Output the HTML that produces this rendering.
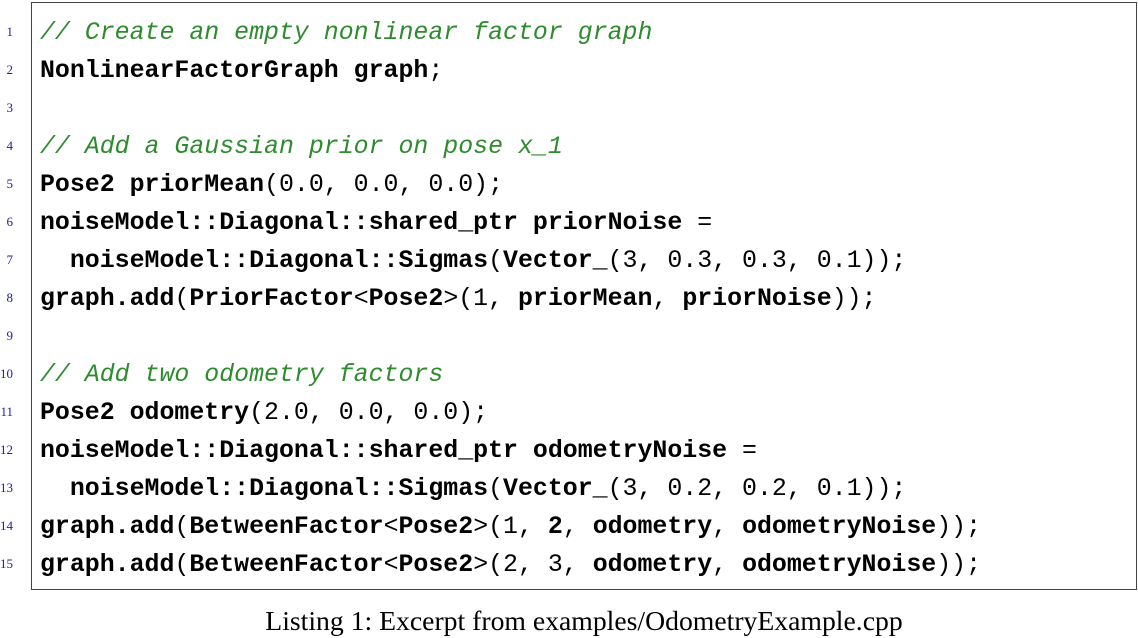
<!DOCTYPE html>
<html><head><style>
body{margin:0;width:1138px;height:636px;background:#fff;position:relative;overflow:hidden}
.box{position:absolute;left:31px;top:2px;width:1104px;height:586px;border:1.5px solid #444}
.l{position:absolute;left:40px;font-family:"Liberation Mono",monospace;font-size:24.9px;line-height:38px;height:38px;white-space:pre;color:#000}
.l b{font-weight:bold}
.c{color:#2e8b2e;font-style:italic}
.n{position:absolute;left:0;width:13px;text-align:right;font-family:"Liberation Serif",serif;font-size:13px;color:#22229a;line-height:38px;height:38px}
.cap{position:absolute;left:0;width:1168px;text-align:center;top:604px;font-family:"Liberation Serif",serif;font-size:27.7px;line-height:34px;color:#000}
</style></head><body>
<div class="box"></div>
<div class="n" style="top:13px">1</div><div class="l" style="top:14px"><span class="c">// Create an empty nonlinear factor graph</span></div>
<div class="n" style="top:51px">2</div><div class="l" style="top:52px"><b>NonlinearFactorGraph graph</b>;</div>
<div class="n" style="top:89px">3</div>
<div class="n" style="top:127px">4</div><div class="l" style="top:128px"><span class="c">// Add a Gaussian prior on pose x_1</span></div>
<div class="n" style="top:165px">5</div><div class="l" style="top:166px"><b>Pose2 priorMean</b>(0.0, 0.0, 0.0);</div>
<div class="n" style="top:203px">6</div><div class="l" style="top:204px"><b>noiseModel::Diagonal::shared_ptr priorNoise</b> =</div>
<div class="n" style="top:241px">7</div><div class="l" style="top:242px">  <b>noiseModel::Diagonal::Sigmas</b>(<b>Vector_</b>(3, 0.3, 0.3, 0.1));</div>
<div class="n" style="top:279px">8</div><div class="l" style="top:280px"><b>graph.add</b>(<b>PriorFactor</b>&lt;<b>Pose2</b>&gt;(1, <b>priorMean</b>, <b>priorNoise</b>));</div>
<div class="n" style="top:317px">9</div>
<div class="n" style="top:355px">10</div><div class="l" style="top:356px"><span class="c">// Add two odometry factors</span></div>
<div class="n" style="top:393px">11</div><div class="l" style="top:394px"><b>Pose2 odometry</b>(2.0, 0.0, 0.0);</div>
<div class="n" style="top:431px">12</div><div class="l" style="top:432px"><b>noiseModel::Diagonal::shared_ptr odometryNoise</b> =</div>
<div class="n" style="top:469px">13</div><div class="l" style="top:470px">  <b>noiseModel::Diagonal::Sigmas</b>(<b>Vector_</b>(3, 0.2, 0.2, 0.1));</div>
<div class="n" style="top:507px">14</div><div class="l" style="top:508px"><b>graph.add</b>(<b>BetweenFactor</b>&lt;<b>Pose2</b>&gt;(1, <b>2</b>, <b>odometry</b>, <b>odometryNoise</b>));</div>
<div class="n" style="top:545px">15</div><div class="l" style="top:546px"><b>graph.add</b>(<b>BetweenFactor</b>&lt;<b>Pose2</b>&gt;(2, 3, <b>odometry</b>, <b>odometryNoise</b>));</div>
<div class="cap">Listing 1: Excerpt from examples/OdometryExample.cpp</div>
</body></html>
